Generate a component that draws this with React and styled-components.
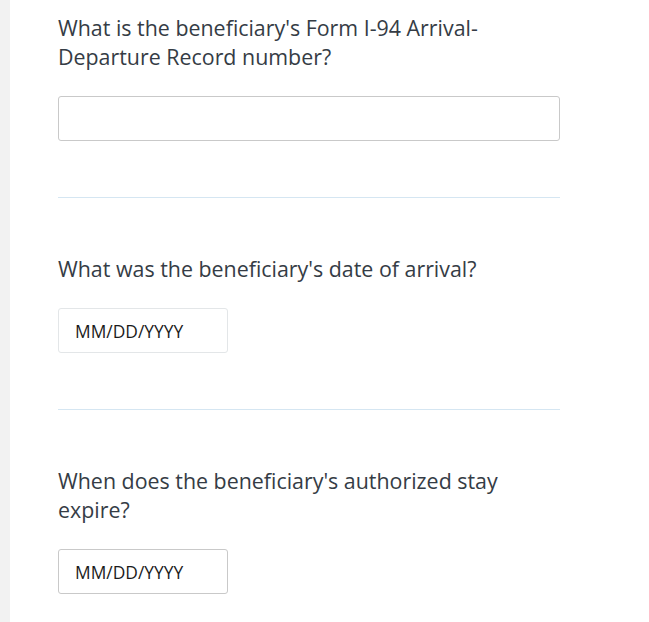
import React from "react";
import styled, { createGlobalStyle } from "styled-components";

const GlobalStyle = createGlobalStyle`
  html, body {
    margin: 0;
    padding: 0;
    background: #fff;
  }
  body {
    font-family: "Source Sans Pro", "Open Sans", "Liberation Sans", sans-serif;
  }
`;

const Page = styled.div`
  display: flex;
  min-height: 622px;
`;

const SideStrip = styled.div`
  width: 10px;
  flex-shrink: 0;
  background: #f2f2f2;
`;

const Main = styled.main`
  padding: 13px 0 0 48px;
  width: 502px;
`;

const Question = styled.fieldset`
  border: none;
  margin: 0;
  padding: 0;
  display: flex;
  flex-direction: column;
  gap: 25px;
`;

const Label = styled.label`
  font-size: 21.4px;
  line-height: 29px;
  color: #353c45;
`;

const TextInput = styled.input`
  box-sizing: border-box;
  height: 45px;
  width: ${(p) => (p.$narrow ? "170px" : "100%")};
  border: 1px solid ${(p) => (p.$faint ? "#e3e6e8" : "#c9c9c9")};
  border-radius: 3px;
  padding: 0 16px;
  font-family: inherit;
  font-size: 17.4px;
  color: #1b1b1b;
  background: #fff;
  outline: none;

  &::placeholder {
    color: #1b1b1b;
  }
`;

const Divider = styled.hr`
  border: none;
  border-top: 1px solid #d5e6f2;
  margin: 56px 0;
`;

function App() {
  return (
    <>
      <GlobalStyle />
      <Page>
        <SideStrip />
        <Main>
          <Question>
            <Label htmlFor="i94">
              What is the beneficiary's Form I-94 Arrival-Departure Record number?
            </Label>
            <TextInput id="i94" type="text" />
          </Question>
          <Divider />
          <Question>
            <Label htmlFor="arrival">What was the beneficiary's date of arrival?</Label>
            <TextInput id="arrival" type="text" placeholder="MM/DD/YYYY" $narrow $faint />
          </Question>
          <Divider />
          <Question>
            <Label htmlFor="expire">When does the beneficiary's authorized stay expire?</Label>
            <TextInput id="expire" type="text" placeholder="MM/DD/YYYY" $narrow />
          </Question>
        </Main>
      </Page>
    </>
  );
}

export default App;
